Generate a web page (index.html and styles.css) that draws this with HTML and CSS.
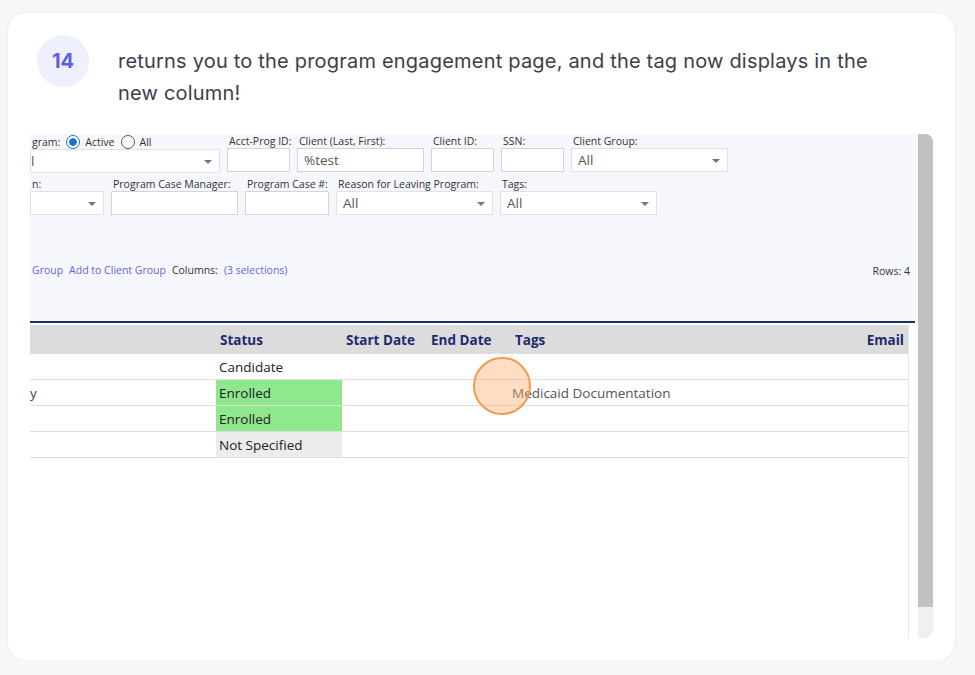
FILE: index.html
```html
<!DOCTYPE html>
<html lang="en">
<head>
    <meta charset="UTF-8">
    <title>Step 14</title>
    <link rel="stylesheet" href="styles.css">
</head>
<body>
    <div class="card">
        <div class="step">
            <div class="step-num">14</div>
            <p class="step-text">returns you to the program engagement page, and the tag now displays in the new column!</p>
        </div>

        <div class="shot">
            <div class="shot-page">
                <div class="filters">
                    <div class="filter-row">
                        <div class="field w-program">
                            <div class="label">gram: <span class="radio on"></span> Active <span class="radio"></span> All</div>
                            <div class="select"><span class="value cut">l</span></div>
                        </div>
                        <div class="field w-small">
                            <div class="label">Acct-Prog ID:</div>
                            <div class="input"></div>
                        </div>
                        <div class="field w-mid">
                            <div class="label">Client (Last, First):</div>
                            <div class="input"><span class="value">%test</span></div>
                        </div>
                        <div class="field w-small">
                            <div class="label">Client ID:</div>
                            <div class="input"></div>
                        </div>
                        <div class="field w-small">
                            <div class="label">SSN:</div>
                            <div class="input"></div>
                        </div>
                        <div class="field w-wide">
                            <div class="label">Client Group:</div>
                            <div class="select"><span class="value">All</span></div>
                        </div>
                    </div>
                    <div class="filter-row">
                        <div class="field w-cut">
                            <div class="label">n:</div>
                            <div class="select"></div>
                        </div>
                        <div class="field w-mid">
                            <div class="label">Program Case Manager:</div>
                            <div class="input"></div>
                        </div>
                        <div class="field w-case">
                            <div class="label">Program Case #:</div>
                            <div class="input"></div>
                        </div>
                        <div class="field w-wide">
                            <div class="label">Reason for Leaving Program:</div>
                            <div class="select"><span class="value">All</span></div>
                        </div>
                        <div class="field w-wide">
                            <div class="label">Tags:</div>
                            <div class="select"><span class="value">All</span></div>
                        </div>
                    </div>

                    <div class="toolbar">
                        <div class="actions">
                            <a href="#">Group</a>
                            <a href="#">Add to Client Group</a>
                            <span>Columns:</span>
                            <a href="#">(3 selections)</a>
                        </div>
                        <div class="rows-count">Rows: 4</div>
                    </div>
                </div>

                <div class="grid">
                    <div class="grid-inner">
                        <table>
                            <colgroup>
                                <col class="c-name">
                                <col class="c-status">
                                <col class="c-start">
                                <col class="c-end">
                                <col>
                                <col class="c-email">
                            </colgroup>
                            <thead>
                                <tr>
                                    <th></th>
                                    <th>Status</th>
                                    <th>Start Date</th>
                                    <th>End Date</th>
                                    <th>Tags</th>
                                    <th class="right">Email</th>
                                </tr>
                            </thead>
                            <tbody>
                                <tr>
                                    <td></td>
                                    <td>Candidate</td>
                                    <td></td><td></td><td></td><td></td>
                                </tr>
                                <tr>
                                    <td class="name">y</td>
                                    <td class="enrolled">Enrolled</td>
                                    <td></td><td></td>
                                    <td class="tag">Medicaid Documentation</td>
                                    <td></td>
                                </tr>
                                <tr>
                                    <td></td>
                                    <td class="enrolled">Enrolled</td>
                                    <td></td><td></td><td></td><td></td>
                                </tr>
                                <tr>
                                    <td></td>
                                    <td class="unknown">Not Specified</td>
                                    <td></td><td></td><td></td><td></td>
                                </tr>
                            </tbody>
                        </table>
                        <div class="click-marker"></div>
                    </div>
                </div>
            </div>
            <div class="scrollbar"><div class="thumb"></div></div>
        </div>
    </div>
</body>
</html>
```

FILE: styles.css
```css
body {
    margin: 0;
    background: #f6f7f9;
    font-family: 'Inter', 'Noto Sans', sans-serif;
}

.card {
    width: 947px;
    margin: 13px 0 0 8px;
    padding: 22px;
    box-sizing: border-box;
    background: #ffffff;
    border-radius: 18px;
    box-shadow: 0 0 0 1px #eceef2, 0 1px 3px rgba(0, 0, 0, 0.06);
}

/* step header */

.step {
    display: flex;
    align-items: flex-start;
    padding-left: 7px;
    margin-bottom: 25px;
}

.step-num {
    flex: none;
    width: 52px;
    height: 52px;
    border-radius: 50%;
    background: #eef0fd;
    color: #5b5fe0;
    font-size: 20px;
    font-weight: 700;
    display: flex;
    align-items: center;
    justify-content: center;
}

.step-text {
    max-width: 770px;
    margin: 10px 0 0 29px;
    font-size: 20px;
    line-height: 32px;
    letter-spacing: 0.2px;
    color: #3b404a;
}

/* screenshot of the app */

.shot {
    display: flex;
    height: 504px;
    border-radius: 0 8px 8px 0;
    overflow: hidden;
}

.shot-page {
    flex: 1;
    display: flex;
    flex-direction: column;
    background: #ffffff;
    font-family: 'Open Sans', 'Noto Sans', sans-serif;
    color: #333;
}

.scrollbar {
    width: 15px;
    background: #f0f0f0;
}

.scrollbar .thumb {
    height: 473px;
    background: #c1c1c1;
}

.filters {
    background: #f5f7fd;
    height: 187px;
    padding: 1px 8px 0 0;
    box-sizing: border-box;
}

.filter-row {
    display: flex;
    gap: 7px;
    margin-bottom: 5px;
}

.field {
    display: flex;
    flex-direction: column;
}

.w-program { width: 190px; }
.w-small { width: 63px; }
.w-mid { width: 127px; }
.w-wide { width: 157px; }
.w-cut { width: 74px; }
.w-case { width: 84px; }

.label {
    font-size: 10.5px;
    line-height: 13px;
    white-space: nowrap;
    padding-left: 2px;
    display: flex;
    align-items: center;
    gap: 5px;
}

.radio {
    width: 12px;
    height: 12px;
    border-radius: 50%;
    border: 1px solid #555;
    background: #fff;
    margin-left: 1px;
}

.radio.on {
    border-color: #1f6fd1;
    background: radial-gradient(circle, #1f6fd1 0 3.5px, #fff 4px);
}

.input,
.select {
    position: relative;
    height: 24px;
    box-sizing: border-box;
    background: #fff;
    border: 1px solid #d4d4d4;
    display: flex;
    align-items: center;
}

.select {
    border-color: #e2e2e2;
}

.select::after {
    content: "";
    position: absolute;
    right: 7px;
    top: 10px;
    border-left: 4px solid transparent;
    border-right: 4px solid transparent;
    border-top: 4px solid #777;
}

.value {
    font-size: 13.5px;
    color: #555;
    padding-left: 6px;
}

.value.cut {
    padding-left: 0;
}

.toolbar {
    display: flex;
    justify-content: space-between;
    align-items: center;
    margin-top: 46px;
    font-size: 10.5px;
}

.actions {
    display: flex;
    gap: 6px;
    padding-left: 2px;
}

.actions a {
    color: #6a62d4;
    text-decoration: none;
}

.rows-count {
    margin-top: 3px;
}

/* result grid */

.grid {
    flex: 1;
    display: flex;
    border-top: 2px solid #1f2e62;
    padding-top: 2px;
    margin-right: 3px;
}

.grid-inner {
    position: relative;
    width: 878px;
    border-right: 1px solid #e6e6e6;
}

table {
    width: 878px;
    table-layout: fixed;
    border-collapse: collapse;
    font-size: 13.5px;
}

.c-name { width: 186px; }
.c-status { width: 126px; }
.c-start { width: 85px; }
.c-end { width: 84px; }
.c-email { width: 120px; }

th {
    height: 28px;
    background: #dcdcdc;
    color: #1d2a6e;
    text-align: left;
    padding: 1px 4px 0;
    font-weight: 700;
    white-space: nowrap;
}

th.right {
    text-align: right;
}

td {
    height: 25px;
    padding: 0 3px;
    border-bottom: 1px solid #dedede;
    color: #222;
    white-space: nowrap;
}

td.name {
    padding-left: 0;
    color: #444;
}

td.enrolled {
    background: #90e88e;
}

td.unknown {
    background: #ececec;
}

td.tag {
    color: #555;
    padding-left: 1px;
}

.click-marker {
    position: absolute;
    left: 443px;
    top: 32px;
    width: 54px;
    height: 54px;
    border-radius: 50%;
    border: 2px solid #f39a4f;
    background: rgba(252, 170, 110, 0.4);
}
```
